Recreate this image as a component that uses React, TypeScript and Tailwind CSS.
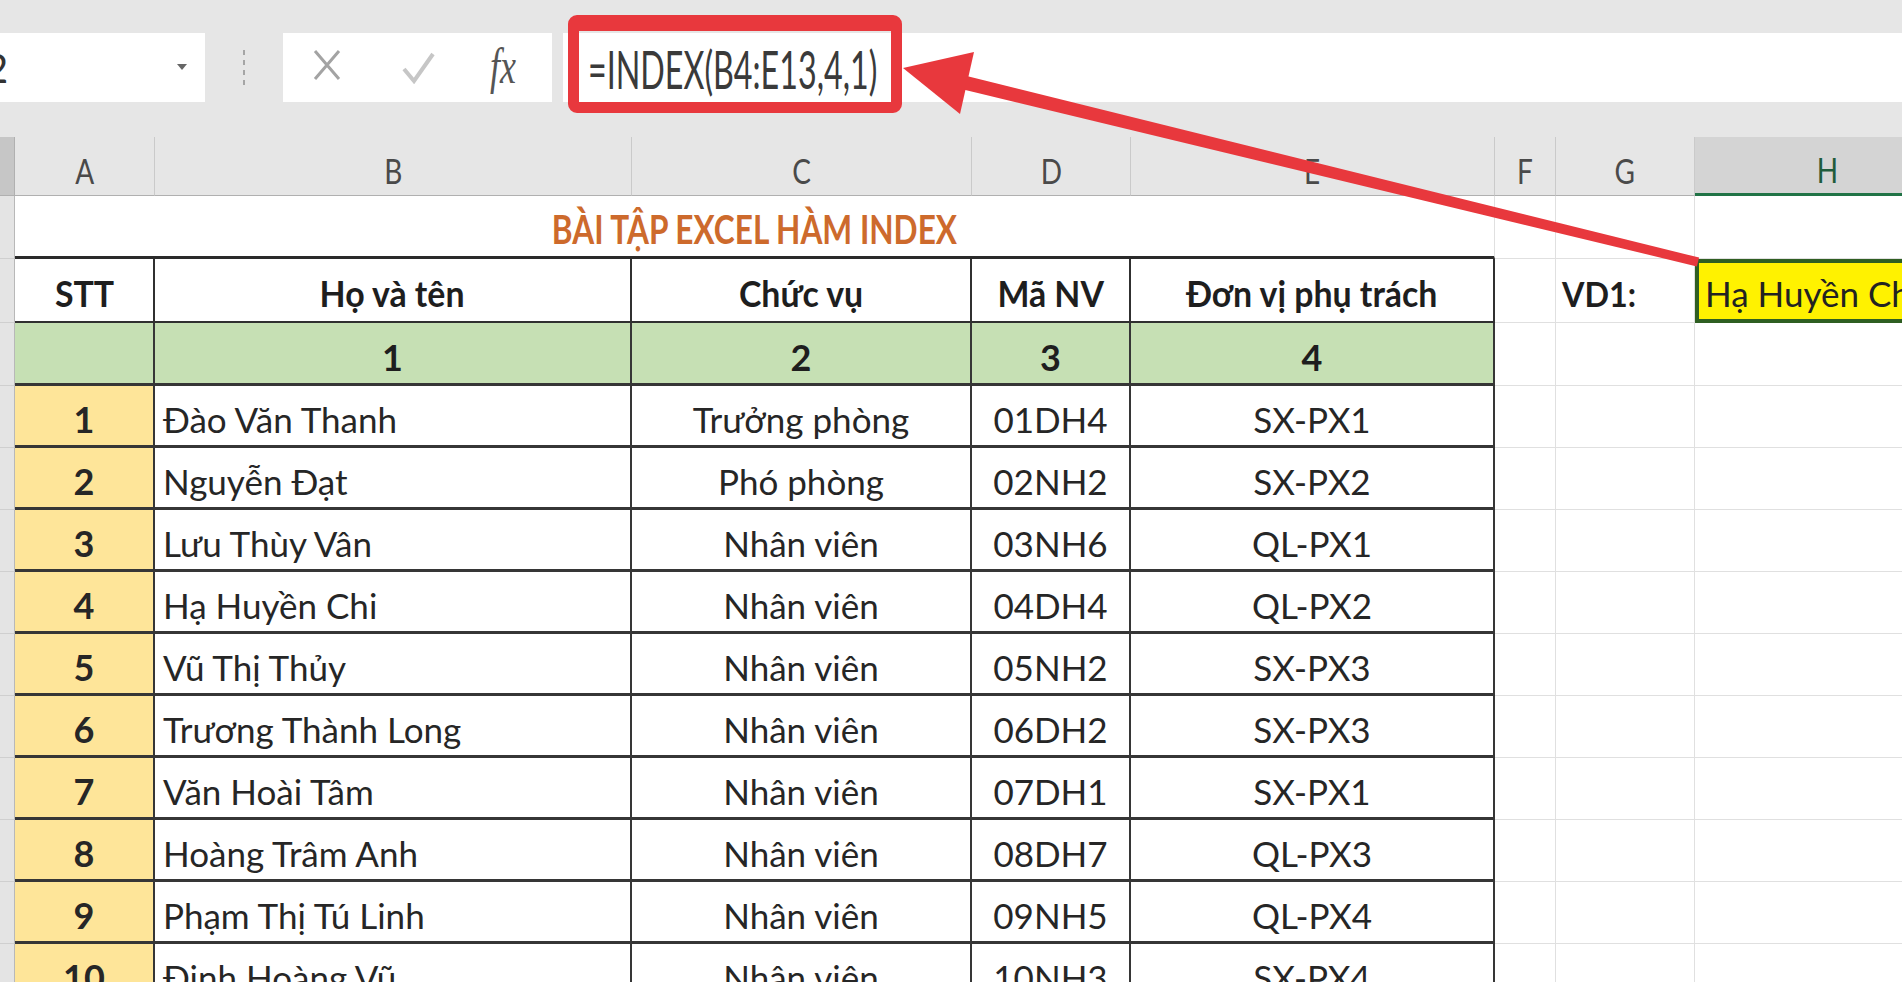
import React from 'react';

const rows = [
  ['1', 'Đào Văn Thanh', 'Trưởng phòng', '01DH4', 'SX-PX1'],
  ['2', 'Nguyễn Đạt', 'Phó phòng', '02NH2', 'SX-PX2'],
  ['3', 'Lưu Thùy Vân', 'Nhân viên', '03NH6', 'QL-PX1'],
  ['4', 'Hạ Huyền Chi', 'Nhân viên', '04DH4', 'QL-PX2'],
  ['5', 'Vũ Thị Thủy', 'Nhân viên', '05NH2', 'SX-PX3'],
  ['6', 'Trương Thành Long', 'Nhân viên', '06DH2', 'SX-PX3'],
  ['7', 'Văn Hoài Tâm', 'Nhân viên', '07DH1', 'SX-PX1'],
  ['8', 'Hoàng Trâm Anh', 'Nhân viên', '08DH7', 'QL-PX3'],
  ['9', 'Phạm Thị Tú Linh', 'Nhân viên', '09NH5', 'QL-PX4'],
  ['10', 'Đinh Hoàng Vũ', 'Nhân viên', '10NH3', 'SX-PX4'],
];

const strip = 'bg-[#e4e4e4] border-r border-b border-r-[#b8b8b8] border-b-[#cfcfcf]';
const blank = 'bg-white border-r border-b border-[#e0e0e0]';
const cell = 'flex items-center pt-[7px] border-r-2 border-b-[3px] border-[#363636] text-[#262626]';

const Strip = () => <div className={strip} />;

const Blank = () => <div className={blank} />;

export default function App() {
  return (
    <div className="relative w-[1902px] h-[990px] overflow-hidden bg-white font-['Lato','Liberation_Sans',sans-serif]">
      {/* ribbon + formula bar */}
      <div className="h-[33px] bg-[#e6e6e6]" />
      <div className="flex h-[69px] bg-[#e6e6e6]">
        <div className="relative flex w-[205px] items-center overflow-hidden bg-white">
          <span className="ml-[-15px] text-[40px] leading-none text-[#333]">2</span>
          <span className="absolute left-[177px] top-[31px] border-x-[5px] border-t-[6px] border-x-transparent border-t-[#666]" />
        </div>
        <div className="flex w-[78px] items-center justify-center">
          <div className="flex flex-col gap-[5px]">
            <span className="h-[5px] w-[2px] bg-[#a5a5a5]" />
            <span className="h-[5px] w-[2px] bg-[#a5a5a5]" />
            <span className="h-[5px] w-[2px] bg-[#a5a5a5]" />
            <span className="h-[5px] w-[2px] bg-[#a5a5a5]" />
          </div>
        </div>
        <div className="relative w-[269px] bg-white">
          <svg className="absolute left-[30px] top-[16px]" width="28" height="32" viewBox="0 0 28 32">
            <path d="M2 2 L26 30 M26 2 L2 30" stroke="#a3a3a3" strokeWidth="3" fill="none" />
          </svg>
          <svg className="absolute left-[119px] top-[19px]" width="33" height="32" viewBox="0 0 33 32">
            <path d="M2 17 L12 29 L31 2" stroke="#c6c6c6" strokeWidth="4" fill="none" />
          </svg>
          <span className="absolute left-[207px] top-[8px] inline-block origin-left scale-x-[0.72] font-['Liberation_Serif',serif] text-[50px] italic leading-none text-[#555]">
            fx
          </span>
        </div>
        <div className="w-[11px]" />
        <div className="flex flex-1 items-center bg-white pl-[25px]">
          <span className="inline-block origin-left scale-x-[0.62] whitespace-nowrap pt-[2px] text-[52px] leading-none text-[#3a3a3a]">
            =INDEX(B4:E13,4,1)
          </span>
        </div>
      </div>
      <div className="h-[35px] bg-[#e6e6e6]" />

      {/* sheet */}
      <div className="grid h-[845px] grid-cols-[15px_140px_477px_340px_159px_364px_61px_139px_264px] grid-rows-[59px_63px_64px_63px_repeat(10,62px)] overflow-hidden">
        {/* column headers */}
        <div className="bg-[#c6c6c6] border-r border-b border-[#b0b0b0]" />
        {['A', 'B', 'C', 'D', 'E', 'F', 'G'].map((l) => (
          <div
            key={l}
            className="flex items-center justify-center pt-[8px] bg-[#e6e6e6] border-r border-b border-r-[#cacaca] border-b-[#b0b0b0] text-[35px] text-[#4a4a4a]"
          >
            <span className="inline-block scale-x-[0.8]">{l}</span>
          </div>
        ))}
        <div className="flex items-center justify-center pt-[8px] bg-[#d4d4d4] border-b-[3px] border-b-[#217346] text-[35px] text-[#1f5c3c]">
          <span className="inline-block scale-x-[0.8]">H</span>
        </div>

        {/* title row */}
        <Strip />
        <div className="col-span-5 flex items-center justify-center pt-[5px] bg-white border-r border-r-[#e0e0e0] border-b-[3px] border-b-[#2a2a2a]">
          <span className="inline-block scale-x-[0.79] whitespace-nowrap text-[40px] font-bold text-[#cd6a2c]">
            BÀI TẬP EXCEL HÀM INDEX
          </span>
        </div>
        <Blank />
        <Blank />
        <Blank />

        {/* header row */}
        <Strip />
        {['STT', 'Họ và tên', 'Chức vụ', 'Mã NV', 'Đơn vị phụ trách'].map((h) => (
          <div key={h} className="flex items-center justify-center pt-[6px] border-r-2 border-b-2 border-[#303030] text-[36px] font-bold text-[#1e1e1e] whitespace-nowrap">
            <span className="inline-block scale-x-[0.94]">{h}</span>
          </div>
        ))}
        <Blank />
        <div className="flex items-center pl-[6px] pt-[6px] bg-white border-r border-b border-[#e0e0e0] text-[34px] font-bold text-[#1e1e1e]">
          <span className="inline-block origin-left scale-x-[0.95]">VD1:</span>
        </div>
        <div className="flex items-center pl-[6px] pt-[5px] bg-[#fff200] border-[4px] border-[#2f5f22] text-[35px] text-[#222] whitespace-nowrap">
          Hạ Huyền Chi
        </div>

        {/* index row */}
        <Strip />
        {['', '1', '2', '3', '4'].map((n, i) => (
          <div key={i} className="flex items-center justify-center pt-[7px] bg-[#c6e0b4] border-r-2 border-b-[3px] border-[#363636] text-[36px] font-bold text-[#1e1e1e]">
            {n}
          </div>
        ))}
        <Blank />
        <Blank />
        <Blank />

        {/* data rows */}
        {rows.map((r) => (
          <React.Fragment key={r[0]}>
            <Strip />
            <div className={`${cell} justify-center bg-[#fee599] text-[36px] font-bold`}>{r[0]}</div>
            <div className={`${cell} pl-[8px] text-[35px] whitespace-nowrap`}>{r[1]}</div>
            <div className={`${cell} justify-center text-[35px]`}>{r[2]}</div>
            <div className={`${cell} justify-center text-[35px]`}>{r[3]}</div>
            <div className={`${cell} justify-center text-[35px]`}>{r[4]}</div>
            <Blank />
            <Blank />
            <Blank />
          </React.Fragment>
        ))}
      </div>

      {/* annotation: red box + arrow */}
      <div className="absolute left-[568px] top-[15px] h-[98px] w-[334px] rounded-[9px] border-[11px] border-t-[16px] border-[#e8383d]" />
      <svg className="pointer-events-none absolute inset-0" width="1902" height="990" viewBox="0 0 1902 990">
        <polygon points="903,68 974,52 960,114" fill="#e8383d" />
        <polygon points="967.7,76.2 1699.1,257.6 1696.9,266.4 964.3,89.8" fill="#e8383d" />
      </svg>
    </div>
  );
}
